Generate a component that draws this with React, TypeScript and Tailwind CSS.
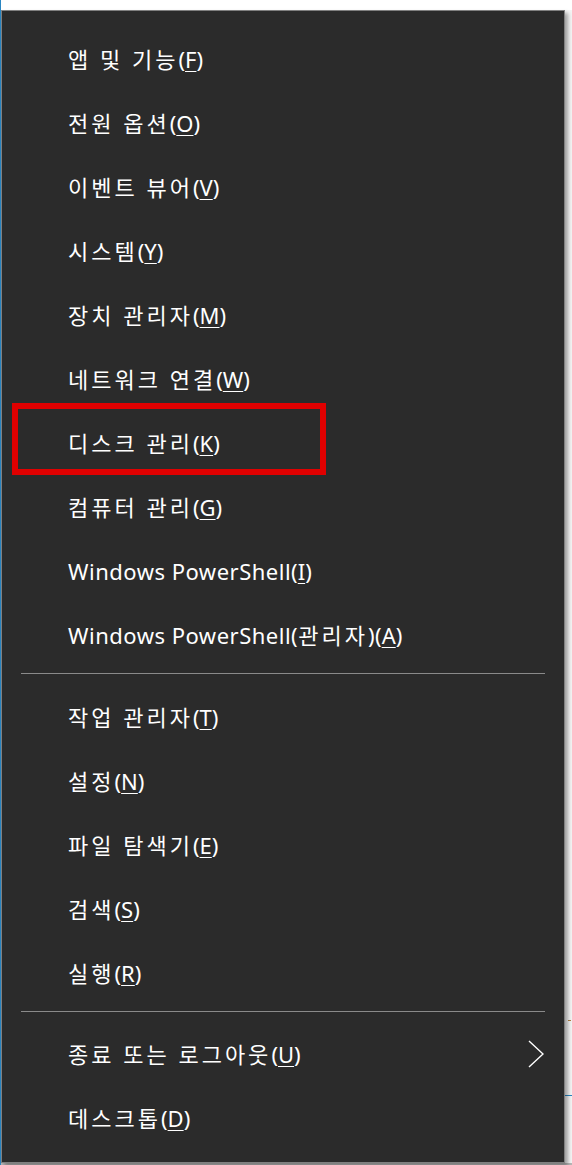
import React from 'react';

type Item = { label: string; key: string; arrow?: boolean };

const groups: Item[][] = [
    [
        { label: '앱 및 기능', key: 'F' },
        { label: '전원 옵션', key: 'O' },
        { label: '이벤트 뷰어', key: 'V' },
        { label: '시스템', key: 'Y' },
        { label: '장치 관리자', key: 'M' },
        { label: '네트워크 연결', key: 'W' },
        { label: '디스크 관리', key: 'K' },
        { label: '컴퓨터 관리', key: 'G' },
        { label: 'Windows PowerShell', key: 'I' },
        { label: 'Windows PowerShell(관리자)', key: 'A' },
    ],
    [
        { label: '작업 관리자', key: 'T' },
        { label: '설정', key: 'N' },
        { label: '파일 탐색기', key: 'E' },
        { label: '검색', key: 'S' },
        { label: '실행', key: 'R' },
    ],
    [
        { label: '종료 또는 로그아웃', key: 'U', arrow: true },
        { label: '데스크톱', key: 'D' },
    ],
];

// 한글 부분은 자간을 넓혀 맑은 고딕 폭에 맞춤
const Label: React.FC<{ text: string }> = ({ text }) => {
    const parts = text.split(/([가-힣]+(?: [가-힣]+)*)/).filter(Boolean);
    return (
        <>
            {parts.map((p, i) =>
                /[가-힣]/.test(p) ? (
                    <span key={i} className="tracking-[3px]">{p}</span>
                ) : (
                    <span key={i} className="tracking-[0.5px]">{p}</span>
                )
            )}
        </>
    );
};

const MenuRow: React.FC<{ item: Item }> = ({ item }) => (
    <div className="h-[64px] flex items-center pl-[66px] pr-[20px]">
        <span className="flex-1 text-white text-[22px] leading-none whitespace-nowrap">
            <Label text={item.label} />
            (<span className="underline underline-offset-[3px] decoration-1">{item.key}</span>)
        </span>
        {item.arrow && (
            <svg width="16" height="28" viewBox="0 0 16 28" className="shrink-0">
                <path d="M1 1 L15 14 L1 27" fill="none" stroke="#ffffff" strokeWidth="1.4" />
            </svg>
        )}
    </div>
);

const App: React.FC = () => {
    return (
        <div
            className="w-[572px] h-[1165px] flex bg-[#f4f4f4] overflow-hidden"
            style={{ fontFamily: '"Noto Sans", "Noto Sans CJK KR", sans-serif' }}
        >
            {/* 뒤 창의 파란 테두리 */}
            <div className="w-[1px] bg-[#2a86c2] shrink-0" />

            <div className="flex flex-col w-[571px]">
                <div className="h-[10px] bg-white shrink-0" />
                <div className="flex">
                    {/* 메뉴 본체 */}
                    <div className="relative w-[564px] h-[1153px] bg-[#2b2b2b] border border-[#808080] pt-[16px] shadow-[3px_3px_4px_rgba(0,0,0,0.35)]">
                        {groups.map((group, gi) => (
                            <div key={gi}>
                                {gi > 0 && (
                                    <div
                                        className={
                                            gi === 1
                                                ? 'mt-[6px] mb-[11px] mx-[19px] h-px bg-[#8a8a8a]'
                                                : 'mt-[6px] mb-[10px] mx-[19px] h-px bg-[#8a8a8a]'
                                        }
                                    />
                                )}
                                {group.map((item) => (
                                    <MenuRow key={item.key} item={item} />
                                ))}
                            </div>
                        ))}

                        {/* 강조 표시 상자 */}
                        <div className="absolute left-[10px] top-[392px] w-[314px] h-[72px] border-[6px] border-[#e00000]" />
                    </div>
                    <div className="flex-1 flex flex-col pt-[1010px]">
                        <div className="h-[1px] w-[3px] ml-[3px] bg-[#b08040]" />
                        <div className="mt-[74px] h-[1px] bg-[#2a86c2]" />
                    </div>
                </div>
                <div className="flex-1 bg-[#b8b8b8]" />
            </div>
        </div>
    );
};

export default App;
